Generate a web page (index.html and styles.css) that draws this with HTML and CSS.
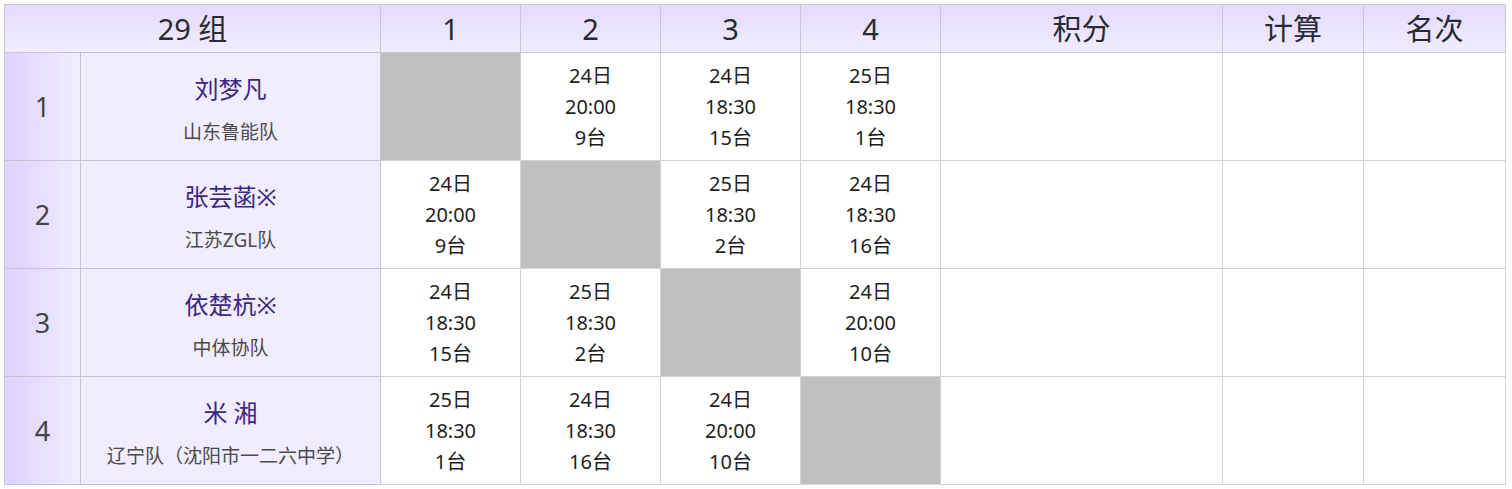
FILE: index.html
```html
<!DOCTYPE html>
<html lang="zh-CN">
<head>
<meta charset="utf-8">
<title>29 组</title>
<link rel="stylesheet" href="styles.css">
</head>
<body>
<table class="grid">
  <colgroup>
    <col class="c-num"><col class="c-name">
    <col class="c-m"><col class="c-m"><col class="c-m"><col class="c-m">
    <col class="c-score"><col class="c-calc"><col class="c-rank">
  </colgroup>
  <thead>
    <tr>
      <th colspan="2">29 组</th>
      <th>1</th><th>2</th><th>3</th><th>4</th>
      <th>积分</th><th>计算</th><th>名次</th>
    </tr>
  </thead>
  <tbody>
    <tr>
      <td class="num">1</td>
      <td class="name"><span class="player">刘梦凡</span><span class="team">山东鲁能队</span></td>
      <td class="self"></td>
      <td class="m">24日<br>20:00<br>9台</td>
      <td class="m">24日<br>18:30<br>15台</td>
      <td class="m">25日<br>18:30<br>1台</td>
      <td></td><td></td><td></td>
    </tr>
    <tr>
      <td class="num">2</td>
      <td class="name"><span class="player">张芸菡※</span><span class="team">江苏ZGL队</span></td>
      <td class="m">24日<br>20:00<br>9台</td>
      <td class="self"></td>
      <td class="m">25日<br>18:30<br>2台</td>
      <td class="m">24日<br>18:30<br>16台</td>
      <td></td><td></td><td></td>
    </tr>
    <tr>
      <td class="num">3</td>
      <td class="name"><span class="player">依楚杭※</span><span class="team">中体协队</span></td>
      <td class="m">24日<br>18:30<br>15台</td>
      <td class="m">25日<br>18:30<br>2台</td>
      <td class="self"></td>
      <td class="m">24日<br>20:00<br>10台</td>
      <td></td><td></td><td></td>
    </tr>
    <tr>
      <td class="num">4</td>
      <td class="name"><span class="player">米 湘</span><span class="team">辽宁队（沈阳市一二六中学）</span></td>
      <td class="m">25日<br>18:30<br>1台</td>
      <td class="m">24日<br>18:30<br>16台</td>
      <td class="m">24日<br>20:00<br>10台</td>
      <td class="self"></td>
      <td></td><td></td><td></td>
    </tr>
  </tbody>
</table>
</body>
</html>
```

FILE: styles.css
```css
html, body {
  margin: 0;
  padding: 0;
  background: #ffffff;
}
body {
  padding: 4px;
  font-family: "Noto Sans", "Noto Sans CJK SC", sans-serif;
  color: #222;
}
.grid {
  border-collapse: collapse;
  table-layout: fixed;
  width: 1502px;
}
.c-num { width: 76px; }
.c-name { width: 300px; }
.c-m { width: 140px; }
.c-score { width: 282px; }
.c-calc { width: 141px; }
.c-rank { width: 142px; }

.grid th,
.grid td {
  border: 1px solid #cbc6d3;
  padding: 0;
  text-align: center;
  vertical-align: middle;
}
.grid th {
  height: 47px;
  font-size: 29px;
  font-weight: normal;
  color: #2a2a33;
  background: linear-gradient(to bottom, #e3dafd, #f1ecfe);
  line-height: 34px;
}
.grid tbody td {
  height: 107px;
  background: #ffffff;
  border-color: #d2d2d2;
}
.grid tbody td.num {
  font-size: 27px;
  color: #444;
  background: linear-gradient(to right, #ddd2fd, #f1ecfe);
  border-color: #c8c2d3;
}
.grid tbody td.name {
  background: #f1ecfe;
  border-color: #c8c2d3;
}
.player {
  display: block;
  font-size: 24px;
  line-height: 32px;
  color: #3b2782;
  margin-top: 4px;
  margin-bottom: 14px;
}
.team {
  display: block;
  font-size: 19px;
  line-height: 26px;
  color: #4a4a4a;
}
.grid tbody td.self {
  background: #c0c0c0;
}
.grid tbody td.m {
  font-size: 20px;
  line-height: 31px;
  color: #1e1e1e;
}
```
